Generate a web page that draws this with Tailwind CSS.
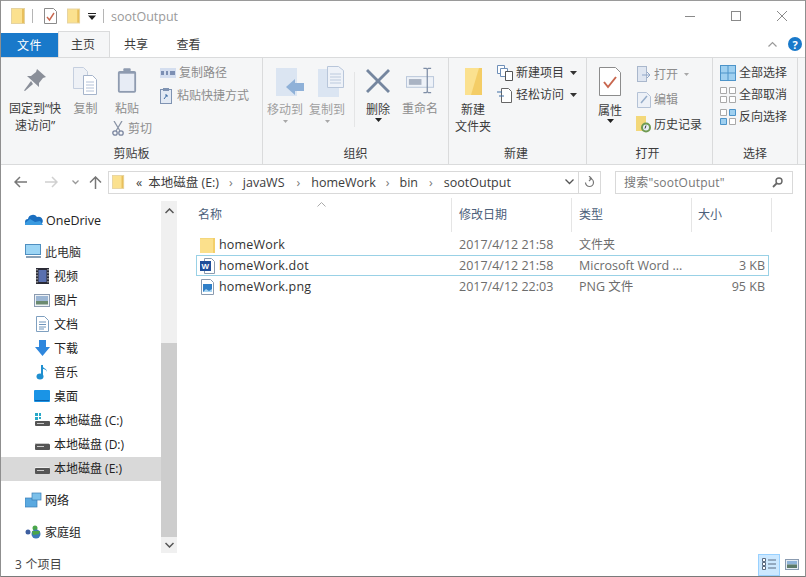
<!DOCTYPE html>
<html lang="zh"><head><meta charset="utf-8">
<script src="https://cdn.jsdelivr.net/npm/@tailwindcss/browser@4"></script>
</head>
<body class="m-0 overflow-hidden bg-white">
<div class="w-[806px] h-[577px] flex flex-col overflow-hidden bg-white text-[12px] leading-[17px] text-[#3c3c3c] border-x border-[#8f8f8f] font-['Open_Sans','Noto_Sans_CJK_SC',sans-serif]">

<!-- title bar -->
<div class="h-[31px] shrink-0 flex items-center border-t border-[#9a9a9a] pl-[10px]">
  <svg width="15" height="16" viewBox="0 0 15 16"><rect x=".5" y=".5" width="13" height="15" fill="#fbe18f" stroke="#e5d3a0"/><rect x="11" y="1" width="2" height="14" fill="#e8bf5c"/></svg>
  <div class="w-px h-[14px] bg-[#b5b5b5] ml-[6px] mr-[11px]"></div>
  <svg width="13" height="16" viewBox="0 0 13 16"><path d="M.5.500h9l3 3v12H.5z" fill="#fff" stroke="#8b8b8b"/><path d="M3 9l2.500 3L10 5" fill="none" stroke="#c8664e" stroke-width="1.400"/></svg>
  <div class="ml-[10px]"><svg width="14" height="16" viewBox="0 0 15 16"><rect x=".5" y=".5" width="13" height="15" fill="#fbe18f" stroke="#e5d3a0"/><rect x="11" y="1" width="2" height="14" fill="#e8bf5c"/></svg></div>
  <svg class="ml-[7px] mt-[1px]" width="8" height="7" viewBox="0 0 8 7"><path d="M0 0h8v1H0zM0 2.500h8L4 7z" fill="#222"/></svg>
  <div class="w-px h-[14px] bg-[#b5b5b5] ml-[7px] mr-[7px]"></div>
  <span class="text-[#9a9a9a] text-[12.500px]">sootOutput</span>
  <div class="ml-auto flex items-center h-full text-[#8a8a8a]">
    <div class="w-[46px] flex justify-center"><div class="w-[10px] h-px bg-[#8a8a8a]"></div></div>
    <div class="w-[46px] flex justify-center"><div class="w-[10px] h-[10px] border border-[#8a8a8a]"></div></div>
    <div class="w-[46px] flex justify-center"><svg width="10" height="10" viewBox="0 0 10 10"><path d="M0 0l10 10M10 0L0 10" stroke="#8a8a8a"/></svg></div>
  </div>
</div>

<!-- tabs -->
<div class="h-[26px] shrink-0 flex items-end relative">
  <div class="w-[57px] h-[24px] bg-[#1979ca] text-white flex items-center justify-center text-[12px] tracking-[.5px]">文件</div>
  <div class="w-[52px] h-[26px] bg-[#f5f6f7] border-x border-t border-[#dadbdc] flex items-center justify-center pb-[1px] pr-[2px]">主页</div>
  <div class="w-[52px] h-[24px] flex items-center justify-center pb-[2px]">共享</div>
  <div class="w-[53px] h-[24px] flex items-center justify-center pb-[2px]">查看</div>
  <div class="ml-auto flex items-center h-[24px] mr-[3px] gap-[11px] pb-[2px]">
    <svg width="9" height="6" viewBox="0 0 9 6"><path d="M.5 5.500l4-4 4 4" fill="none" stroke="#9a9a9a" stroke-width="1.200"/></svg>
    <div class="w-[14px] h-[14px] rounded-full bg-[#1979ca] text-white text-[11px] font-bold flex items-center justify-center">?</div>
  </div>
</div>

<!-- ribbon -->
<div class="h-[108px] shrink-0 flex bg-[#f5f6f7] border-y border-[#dadbdc] pr-[7px]">
  <!-- clipboard -->
  <div class="w-[262px] flex flex-col border-r border-[#dadbdc]">
    <div class="flex-1 flex">
      <div class="w-[64px] pl-[4px] flex flex-col items-center text-center pt-[11px] whitespace-nowrap">
        <svg width="22" height="22" viewBox="0 0 22 22"><path d="M13 0l9 8-3 1-4 5v4L3 7h4l5-4z" fill="#8a8f99"/><path d="M7 12l-7 9.500 1 .5 8-7z" fill="#8a8f99"/></svg>
        <div class="mt-[9px]">固定到“快<br>速访问”</div>
      </div>
      <div class="w-[41px] flex flex-col items-center text-[#8d8d8d] pt-[9px]">
        <svg width="25" height="28" viewBox="0 0 25 28"><path d="M.5.500h10l4 4v17H.5z" fill="#eef1f6" stroke="#c5cfdf"/><path d="M10.500 8.500h9l4 4v15h-13z" fill="#fff" stroke="#a5b4cb"/><path d="M13 15h8M13 18h8M13 21h8M13 24h8" stroke="#b4c2d8"/></svg>
        <div class="mt-[5px]">复制</div>
      </div>
      <div class="w-[42px] flex flex-col items-center text-[#8d8d8d] pt-[8px]">
        <svg width="20" height="29" viewBox="0 0 22 29"><rect x="1" y="4" width="20" height="24" rx="2" fill="#8e9bb0"/><rect x="3" y="7" width="16" height="19" fill="#e7ecf5"/><rect x="7" y="1" width="8" height="5" rx="1" fill="#8e9bb0"/></svg>
        <div class="mt-[5px]">粘贴</div>
        <div class="flex items-center gap-[4px] mt-[3px] self-start ml-[6px] whitespace-nowrap">
          <svg class="shrink-0" width="12" height="15" viewBox="0 0 12 15"><path d="M2 0l6 10M10 0L4 10" stroke="#8a94a6" stroke-width="1.300"/><circle cx="3" cy="12" r="2.200" fill="none" stroke="#7b86a0" stroke-width="1.300"/><circle cx="9" cy="12" r="2.200" fill="none" stroke="#7b86a0" stroke-width="1.300"/></svg>
          <span>剪切</span>
        </div>
      </div>
      <div class="flex flex-col text-[#8d8d8d] pt-[6px] gap-[6px] ml-[12px]">
        <div class="flex items-center gap-[3px] h-[17px]"><svg width="16" height="10" viewBox="0 0 16 10"><rect width="16" height="10" fill="#d4deef"/><path d="M1 3h3v4H1zM6 3h2v4H6zM10 3h5v4h-5z" fill="#7c8fb3"/></svg><span>复制路径</span></div>
        <div class="flex items-center gap-[5px] h-[17px]"><svg width="12" height="16" viewBox="0 0 12 16"><rect x=".5" y="1.500" width="11" height="14" fill="#e3eaf4" stroke="#7f93b2"/><rect x="3" y="0" width="6" height="3" fill="#7f93b2"/><path d="M4 11l3-4M5 7h2v2" stroke="#3f6ea5" fill="none"/></svg><span>粘贴快捷方式</span></div>
      </div>
    </div>
    <div class="h-[16px] mb-[3px] text-center">剪贴板</div>
  </div>
  <!-- organize -->
  <div class="w-[186px] flex flex-col border-r border-[#dadbdc]">
    <div class="flex-1 flex">
      <div class="w-[44px] flex flex-col items-center text-[#a0a0a0] pt-[9px]">
        <svg class="ml-[9px]" width="28" height="30" viewBox="0 0 28 30"><rect x="0" y="1" width="21" height="28" fill="#dbe5f2"/><path d="M10 20l9-8v4h9v8h-9v4z" fill="#8fb1d8"/></svg>
        <div class="mt-[4px] whitespace-nowrap">移动到</div>
        <svg class="mt-[2px]" width="5" height="3" viewBox="0 0 5 3"><path d="M0 0h5L2.500 3z" fill="#a8a8a8"/></svg>
      </div>
      <div class="w-[40px] flex flex-col items-center text-[#a0a0a0] pt-[8px]">
        <svg class="ml-[8px]" width="27" height="31" viewBox="0 0 27 31"><rect x="0" y="3" width="21" height="28" fill="#dbe5f2"/><path d="M9.500.500h11l5 4v17h-16z" fill="#eef2f8" stroke="#b8c6da"/><path d="M12 8h11M12 11h11M12 14h11M12 17h11" stroke="#bccadd"/></svg>
        <div class="mt-[4px] whitespace-nowrap">复制到</div>
        <svg class="mt-[2px]" width="5" height="3" viewBox="0 0 5 3"><path d="M0 0h5L2.500 3z" fill="#a8a8a8"/></svg>
      </div>
      <div class="w-px h-[55px] bg-[#e4e5e6] mt-[14px] ml-[7px]"></div>
      <div class="w-[46px] flex flex-col items-center pt-[10px]">
        <svg width="26" height="26" viewBox="0 0 26 26"><path d="M3 1l10 10L23 1l2 2-10 10 10 10-2 2-10-10L3 25l-2-2 10-10L1 3z" fill="#75869f"/></svg>
        <div class="mt-[7px]">删除</div>
        <svg width="7" height="4" viewBox="0 0 7 4"><path d="M0 0h7L3.500 4z" fill="#222"/></svg>
      </div>
      <div class="w-[38px] flex flex-col items-center text-[#8d8d8d] pt-[9px]">
        <svg width="29" height="27" viewBox="0 0 30 27"><rect x=".5" y="9.500" width="28" height="11" fill="#eef2f8" stroke="#b8c6da"/><rect x="3" y="12" width="13" height="6" fill="#a9b3c3"/><path d="M18 1h3l1 1 1-1h3M22 2v23M18 26h3l1-1 1 1h3" fill="none" stroke="#7f8ea6" stroke-width="1.300"/></svg>
        <div class="mt-[6px] whitespace-nowrap">重命名</div>
      </div>
    </div>
    <div class="h-[16px] mb-[3px] text-center">组织</div>
  </div>
  <!-- new -->
  <div class="w-[138px] flex flex-col border-r border-[#dadbdc]">
    <div class="flex-1 flex">
      <div class="w-[48px] flex flex-col items-center pt-[10px]">
        <svg width="17" height="27" viewBox="0 0 17 27"><rect width="17" height="27" fill="#fbe18f"/><path d="M14 0h3v27H6z" fill="#f4cd66"/></svg>
        <div class="mt-[6px] text-center">新建<br>文件夹</div>
      </div>
      <div class="flex flex-col pt-[6px] gap-[5px]">
        <div class="flex items-center gap-[3px] h-[17px] whitespace-nowrap"><svg width="16" height="16" viewBox="0 0 16 16"><path d="M.5.500h7v8h-7z" fill="#fff" stroke="#6e8fb8"/><path d="M3.500 3.500h7v8h-7z" fill="#fff" stroke="#6e8fb8"/><path d="M8.500 6.500h7v9h-7z" fill="#fff" stroke="#555"/></svg>新建项目<svg class="ml-[3px]" width="7" height="4" viewBox="0 0 7 4"><path d="M0 0h7L3.500 4z" fill="#333"/></svg></div>
        <div class="flex items-center gap-[3px] h-[17px] whitespace-nowrap"><svg width="16" height="16" viewBox="0 0 16 16"><path d="M4.500 1.500h7l3 3v11h-10z" fill="#fff" stroke="#666"/><path d="M0 5h5M2 9h5" stroke="#3f6ea5"/></svg>轻松访问<svg class="ml-[3px]" width="7" height="4" viewBox="0 0 7 4"><path d="M0 0h7L3.500 4z" fill="#333"/></svg></div>
      </div>
    </div>
    <div class="h-[16px] mb-[3px] pl-[55px]">新建</div>
  </div>
  <!-- open -->
  <div class="w-[126px] flex flex-col border-r border-[#dadbdc]">
    <div class="flex-1 flex">
      <div class="w-[46px] flex flex-col items-center pt-[9px]">
        <svg width="22" height="29" viewBox="0 0 22 29"><path d="M.5.500h16l5 5v23H.500z" fill="#fff" stroke="#8c8c8c"/><path d="M5 15l4 5 8-10" fill="none" stroke="#c8664e" stroke-width="2"/></svg>
        <div class="mt-[6px]">属性</div>
        <svg width="7" height="4" viewBox="0 0 7 4"><path d="M0 0h7L3.500 4z" fill="#222"/></svg>
      </div>
      <div class="flex flex-col pt-[8px] gap-[8px] ml-[4px]">
        <div class="flex items-center gap-[3px] h-[17px] text-[#8d8d8d]"><svg width="14" height="17" viewBox="0 0 14 17"><rect x=".5" y=".5" width="9" height="15" fill="#dfe6f1" stroke="#a9b7cc"/><path d="M5 9h8M10 6l3 3-3 3" stroke="#8fa6c8" fill="none"/></svg>打开<svg class="ml-[3px]" width="5" height="3" viewBox="0 0 5 3"><path d="M0 0h5L2.500 3z" fill="#a8a8a8"/></svg></div>
        <div class="flex items-center gap-[3px] h-[17px] text-[#8d8d8d]"><svg width="14" height="17" viewBox="0 0 14 17"><path d="M.5 1.500h9l4 4v11H.5z" fill="#edf1f7" stroke="#b4c2d6"/><path d="M4 12l6-7" stroke="#95acc9" stroke-width="1.500"/></svg>编辑</div>
        <div class="flex items-center gap-[3px] h-[17px] -ml-[1px]"><svg width="15" height="17" viewBox="0 0 15 17"><rect x="0" y="0" width="10" height="15" fill="#f3d87a"/><circle cx="10" cy="11.500" r="5" fill="#6f9a52"/><circle cx="10" cy="11.500" r="3" fill="#e8eef6"/><path d="M10 9.500l-1 3" stroke="#333"/></svg>历史记录</div>
      </div>
    </div>
    <div class="h-[16px] mb-[3px] text-center pr-[4px]">打开</div>
  </div>
  <!-- select -->
  <div class="w-[85px] flex flex-col border-r border-[#dadbdc]">
    <div class="flex-1 flex flex-col pl-[7px] pt-[6px] gap-[5px]">
      <div class="flex items-center gap-[3px] h-[17px] whitespace-nowrap"><svg width="16" height="16" viewBox="0 0 16 16"><rect x=".5" y=".5" width="15" height="15" fill="#9fd0f0" stroke="#4d94c9"/><path d="M8 0v16M0 8h16" stroke="#4d94c9"/></svg>全部选择</div>
      <div class="flex items-center gap-[3px] h-[17px] whitespace-nowrap"><svg width="16" height="16" viewBox="0 0 16 16"><path d="M.5.500h6v6h-6zM9.500.500h6v6h-6zM.5 9.500h6v6h-6zM9.500 9.500h6v6h-6z" fill="#fff" stroke="#a9a9a9"/></svg>全部取消</div>
      <div class="flex items-center gap-[3px] h-[17px] whitespace-nowrap"><svg width="16" height="16" viewBox="0 0 16 16"><path d="M.5.500h6v6h-6zM9.500 9.500h6v6h-6z" fill="#fff" stroke="#a9a9a9"/><path d="M9.500.500h6v6h-6zM.5 9.500h6v6h-6z" fill="#9fd0f0" stroke="#4d94c9"/></svg>反向选择</div>
    </div>
    <div class="h-[16px] mb-[3px] text-center">选择</div>
  </div>
</div>

<!-- address bar -->
<div class="h-[33px] shrink-0 flex items-center pt-[1px]">
  <svg class="ml-[13px]" width="13" height="12" viewBox="0 0 13 12"><path d="M6 1L1 6l5 5M1 6h12" fill="none" stroke="#777" stroke-width="1.500"/></svg>
  <svg class="ml-[18px]" width="13" height="12" viewBox="0 0 13 12"><path d="M7 1l5 5-5 5M12 6H0" fill="none" stroke="#d0d0d0" stroke-width="1.500"/></svg>
  <svg class="ml-[14px]" width="7" height="5" viewBox="0 0 7 5"><path d="M.5.500l3 3 3-3" fill="none" stroke="#999" stroke-width="1.300"/></svg>
  <svg class="ml-[10px]" width="13" height="13" viewBox="0 0 13 13"><path d="M1 6.500l5.500-5.500 5.500 5.500M6.500 1v12" fill="none" stroke="#777" stroke-width="1.500"/></svg>
  <div class="ml-[6px] w-[493px] h-[23px] border border-[#d9d9d9] flex items-center text-[12.500px] whitespace-nowrap">
    <svg class="ml-[3px]" width="13" height="16" viewBox="0 0 15 16"><rect x=".5" y=".5" width="13" height="15" fill="#fbe18f" stroke="#e5d3a0"/><rect x="11" y="1" width="2" height="14" fill="#e8bf5c"/></svg>
    <span class="ml-[11px]">«</span>
    <span class="ml-[6px]">本地磁盘 (E:)</span>
    <span class="ml-[10px] text-[#777]">›</span>
    <span class="ml-[10px]">javaWS</span>
    <span class="ml-[12px] text-[#777]">›</span>
    <span class="ml-[11px]">homeWork</span>
    <span class="ml-[10px] text-[#777]">›</span>
    <span class="ml-[10px]">bin</span>
    <span class="ml-[11px] text-[#777]">›</span>
    <span class="ml-[11px]">sootOutput</span>
    <svg class="ml-auto mr-[4px]" width="9" height="6" viewBox="0 0 9 6"><path d="M.5.500l4 4 4-4" fill="none" stroke="#555" stroke-width="1.300"/></svg>
    <div class="w-px h-full bg-[#d9d9d9]"></div>
    <svg class="mx-[5px]" width="11" height="12" viewBox="0 0 11 12"><path d="M5.500 2.500a4 4 0 1 1-4 4M5 0l2.500 2.500L5 5" fill="none" stroke="#777" stroke-width="1.200"/></svg>
  </div>
  <div class="ml-[14px] w-[178px] h-[23px] border border-[#d9d9d9] flex items-center pl-[8px] text-[#777]">
    <span class="tracking-[.2px]">搜索"sootOutput"</span>
    <svg class="ml-auto mr-[9px]" width="11" height="11" viewBox="0 0 11 11"><circle cx="7" cy="4" r="3" fill="none" stroke="#666" stroke-width="1.400"/><path d="M5 6l-4 4" stroke="#666" stroke-width="1.800"/></svg>
  </div>
</div>

<!-- main -->
<div class="flex-1 min-h-0 flex">
  <!-- nav -->
  <div class="w-[160px] shrink-0 flex flex-col text-[#222] pt-[11px] text-[12px]">
    <div class="h-[24px] flex items-center pl-[24px] gap-[3px] pb-[2px]"><svg width="18" height="12" viewBox="0 0 18 12"><path d="M3 11a3 3 0 0 1 0-6 5 5 0 0 1 9-2 4 4 0 0 1 3 8z" fill="#1a6fc0"/><path d="M0 9l5-4 5 3 5-1 3 4H0z" fill="#3a9ae0"/></svg><span class="text-[12.500px]">OneDrive</span></div>
    <div class="h-[8px]"></div>
    <div class="h-[24px] flex items-center pl-[24px] gap-[3px] pb-[2px]"><svg width="17" height="16" viewBox="0 0 17 16"><rect x=".5" y=".5" width="15" height="10" fill="#9cd5f5" stroke="#4f8fc0"/><path d="M1 13h15" stroke="#8aa0b5" stroke-width="2"/></svg><span class="text-[#333]">此电脑</span></div>
    <div class="h-[24px] flex items-center pl-[34px] gap-[4px] pb-[2px]"><svg width="15" height="16" viewBox="0 0 15 16"><rect x="1" y="0" width="13" height="16" fill="#2a2a35"/><rect x="3.500" y="2" width="8" height="12" fill="#5a70b0"/><path d="M2 1v14M13 1v14" stroke="#ddd" stroke-dasharray="1.500 1.500"/></svg><span>视频</span></div>
    <div class="h-[24px] flex items-center pl-[33px] gap-[4px] pb-[2px]"><svg width="16" height="13" viewBox="0 0 16 13"><rect x=".5" y=".5" width="15" height="12" fill="#eef2f6" stroke="#8b9bb0"/><rect x="2" y="2" width="12" height="5" fill="#9cb6d4"/><rect x="2" y="7" width="12" height="3.500" fill="#6b8a70"/></svg><span>图片</span></div>
    <div class="h-[24px] flex items-center pl-[35px] gap-[5px] pb-[2px]"><svg width="13" height="16" viewBox="0 0 13 16"><path d="M.5.500h8l4 4v11H.500z" fill="#fff" stroke="#7fa0c0"/><path d="M3 6h7M3 8.500h7M3 11h7M3 13h5" stroke="#6f95bb"/></svg><span>文档</span></div>
    <div class="h-[24px] flex items-center pl-[34px] gap-[4px] pb-[2px]"><svg width="15" height="16" viewBox="0 0 15 16"><path d="M4 0h7v7h4l-7.500 9L0 7h4z" fill="#2f87dd"/></svg><span>下载</span></div>
    <div class="h-[24px] flex items-center pl-[35px] gap-[5px] pb-[2px]"><svg width="13" height="16" viewBox="0 0 13 16"><path d="M6 1v11" stroke="#1f8fd0" stroke-width="2"/><path d="M6 1c1 4 5 3 5 7-1-3-3-3-5-3z" fill="#1f8fd0"/><ellipse cx="4" cy="12.500" rx="3.500" ry="3" fill="#1f8fd0"/></svg><span>音乐</span></div>
    <div class="h-[24px] flex items-center pl-[33px] gap-[4px] pb-[2px]"><svg width="16" height="13" viewBox="0 0 16 13"><rect width="16" height="12" rx="1" fill="#1a94e6"/><rect x="1" y="10" width="14" height="1" fill="#0a5fa8"/></svg><span>桌面</span></div>
    <div class="h-[24px] flex items-center pl-[33px] gap-[4px] pb-[2px]"><svg width="16" height="14" viewBox="0 0 16 14"><path d="M1 0h3v3H1zM5 0h2v3H5zM1 4h3v3H1zM5 4h2v2H5z" fill="#28a8c8"/><rect x="1" y="8" width="15" height="5" rx="1" fill="#555"/><rect x="3" y="10" width="7" height="1" fill="#ccc"/></svg><span class="whitespace-nowrap">本地磁盘 (C:)</span></div>
    <div class="h-[24px] flex items-center pl-[33px] gap-[4px] pb-[2px]"><svg width="16" height="14" viewBox="0 0 16 14"><rect x="1" y="6" width="14" height="1" fill="#ccc"/><rect x="1" y="7" width="15" height="6" rx="1" fill="#555"/><rect x="3" y="9" width="7" height="1" fill="#ccc"/></svg><span class="whitespace-nowrap">本地磁盘 (D:)</span></div>
    <div class="h-[24px] flex items-center pl-[33px] gap-[4px] pb-[2px] bg-[#d9d9d9]"><svg width="16" height="14" viewBox="0 0 16 14"><rect x="1" y="6" width="14" height="1" fill="#eee"/><rect x="1" y="7" width="15" height="6" rx="1" fill="#555"/><rect x="3" y="9" width="7" height="1" fill="#ccc"/></svg><span class="whitespace-nowrap">本地磁盘 (E:)</span></div>
    <div class="h-[8px]"></div>
    <div class="h-[24px] flex items-center pl-[24px] gap-[3px] pb-[2px]"><svg width="17" height="16" viewBox="0 0 17 16"><rect x="0" y="6" width="12" height="9" fill="#5aa9e0" stroke="#3a7db5" stroke-width=".7"/><rect x="7" y="1" width="9" height="7" fill="#7cc0ea" stroke="#3a7db5" stroke-width=".7"/></svg><span>网络</span></div>
    <div class="h-[8px]"></div>
    <div class="h-[24px] flex items-center pl-[24px] gap-[3px] pb-[2px]"><svg width="17" height="14" viewBox="0 0 17 14"><circle cx="3" cy="7" r="2.500" fill="#3d5fa0"/><circle cx="10" cy="3" r="2.500" fill="#4aa64a"/><circle cx="11" cy="9" r="4.500" fill="#3d7ab8"/><path d="M7 6l8 0-1 3-6 1z" fill="#4aa64a"/></svg><span>家庭组</span></div>
  </div>
  <!-- scrollbar -->
  <div class="w-[16px] shrink-0 flex flex-col bg-[#f0f0f0] mt-[3px]">
    <div class="h-[20px] flex items-center justify-center"><svg width="9" height="6" viewBox="0 0 9 6"><path d="M.5 5l4-4 4 4" fill="none" stroke="#555" stroke-width="1.500"/></svg></div>
    <div class="h-[122px]"></div>
    <div class="flex-1 bg-[#cdcdcd]"></div>
    <div class="h-[16px] flex items-center justify-center"><svg width="9" height="6" viewBox="0 0 9 6"><path d="M.5 1l4 4 4-4" fill="none" stroke="#555" stroke-width="1.500"/></svg></div>
  </div>
  <!-- list -->
  <div class="flex-1 min-w-0 flex flex-col pl-[5px]">
    <div class="h-[36px] shrink-0 flex relative">
      <div class="w-[270px] border-r border-[#e5e5e5] h-[34px] flex items-center pl-[16px] pb-[2px] text-[#4c607a]">名称</div>
      <svg class="absolute left-[135px] top-[4px]" width="9" height="5" viewBox="0 0 9 5"><path d="M.5 4.500l4-4 4 4" fill="none" stroke="#aaa"/></svg>
      <div class="w-[120px] border-r border-[#e5e5e5] h-[34px] flex items-center pl-[7px] pb-[2px] text-[#4c607a]">修改日期</div>
      <div class="w-[120px] border-r border-[#e5e5e5] h-[34px] flex items-center pl-[7px] pb-[2px] text-[#4c607a]">类型</div>
      <div class="w-[80px] border-r border-[#e5e5e5] h-[34px] flex items-center pl-[6px] pb-[2px] text-[#4c607a]">大小</div>
    </div>
    <div class="text-[12.500px] text-[#6d6d6d] ml-[14px] w-[573px] flex flex-col">
      <div class="h-[21px] flex items-center border border-transparent">
        <div class="w-[255px] flex items-center pl-[3px] gap-[4px]"><svg width="15" height="16" viewBox="0 0 15 16"><rect y="1" width="15" height="15" fill="#fbe08c"/><path d="M0 1h15v1H0z" fill="#f4d77c"/><rect x="13" y="1" width="2" height="15" fill="#f3cf6a"/></svg><span class="text-[#333] tracking-[.2px]">homeWork</span></div>
        <div class="w-[120px] pl-[7px]">2017/4/12 21:58</div>
        <div class="w-[120px] pl-[7px] text-[12px]">文件夹</div>
      </div>
      <div class="h-[21px] flex items-center border border-[#99d1e6]">
        <div class="w-[255px] flex items-center pl-[3px] gap-[4px]"><svg width="15" height="16" viewBox="0 0 15 16"><path d="M4.500.500h7l3 3v12h-10z" fill="#fff" stroke="#8a9bb0"/><rect x="0" y="3" width="11" height="10" fill="#1e4e9a"/><text x="1.500" y="11" font-size="8" font-weight="bold" fill="#fff" font-family="Liberation Sans">W</text></svg><span class="text-[#333] tracking-[.2px]">homeWork.dot</span></div>
        <div class="w-[120px] pl-[7px]">2017/4/12 21:58</div>
        <div class="w-[120px] pl-[7px] whitespace-nowrap">Microsoft Word ...</div>
        <div class="w-[73px] text-right">3 KB</div>
      </div>
      <div class="h-[21px] flex items-center border border-transparent">
        <div class="w-[255px] flex items-center pl-[3px] gap-[4px]"><svg width="15" height="16" viewBox="0 0 15 16"><path d="M1.500.500h9l3 3v12h-12z" fill="#fff" stroke="#8a9bb0"/><rect x="3" y="5" width="9" height="8" fill="#2f7fc8"/><path d="M3 13l3-3 3 2 3-2v3z" fill="#a8d4f0"/></svg><span class="text-[#333] tracking-[.2px]">homeWork.png</span></div>
        <div class="w-[120px] pl-[7px]">2017/4/12 22:03</div>
        <div class="w-[120px] pl-[7px]">PNG 文件</div>
        <div class="w-[73px] text-right">95 KB</div>
      </div>
    </div>
  </div>
</div>

<!-- status -->
<div class="h-[24px] shrink-0 flex items-center pl-[14px] border-b border-[#7a7a7a] text-[#444]">
  <span class="tracking-[.2px]">3 个项目</span>
  <div class="ml-auto flex items-center">
    <div class="w-[22px] h-[22px] bg-[#cce8ff] border border-[#99d1ff] flex items-center justify-center"><svg width="14" height="13" viewBox="0 0 14 13"><path d="M.5.500h3v3h-3zM.5 4.500h3v3h-3zM.5 8.500h3v3h-3z" fill="#fff" stroke="#5a6a80"/><path d="M6 2h8M6 6h8M6 10h8" stroke="#5a6a80"/></svg></div>
    <div class="w-[23px] flex items-center justify-center mr-[2px]"><svg width="14" height="11" viewBox="0 0 14 11"><rect x=".5" y=".5" width="13" height="10" fill="#e6ecf3" stroke="#8a9bb0"/><rect x="2" y="2" width="10" height="3.500" fill="#8fb3d8"/><rect x="2" y="5.500" width="10" height="3.500" fill="#5d7a68"/></svg></div>
  </div>
</div>
</div>
</body></html>
